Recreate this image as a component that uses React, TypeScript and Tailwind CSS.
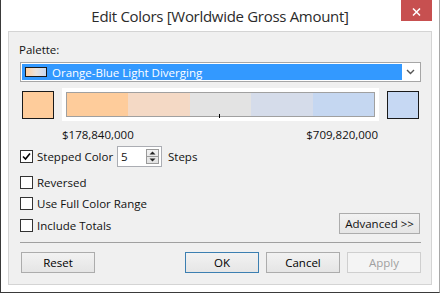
import React from 'react';

const steps = ['#fecc9b', '#f4d9c5', '#e3e3e3', '#d5dcea', '#c5d7f1'];

function CheckBox({ checked = false }: { checked?: boolean }) {
  return (
    <span className="w-[13px] h-[13px] border border-[#333333] bg-white flex items-center justify-center shrink-0">
      {checked && (
        <svg width="9" height="9" viewBox="0 0 9 9">
          <path d="M1 4.5 L3.5 7 L8 1.5" fill="none" stroke="#000" strokeWidth="1.6" />
        </svg>
      )}
    </span>
  );
}

function WinButton({
  children,
  variant = 'normal',
}: {
  children: React.ReactNode;
  variant?: 'normal' | 'default' | 'disabled';
}) {
  const tone =
    variant === 'default'
      ? 'border-[#3c7fb1] bg-gradient-to-b from-[#f2f2f2] to-[#e6e6e6] text-black'
      : variant === 'disabled'
        ? 'border-[#cfcfcf] bg-[#f4f4f4] text-[#a0a0a0]'
        : 'border-[#acacac] bg-gradient-to-b from-[#f2f2f2] to-[#e5e5e5] text-black';
  return (
    <button className={`w-[74px] h-[21px] border text-[11.5px] leading-none flex items-center justify-center ${tone}`}>
      {children}
    </button>
  );
}

export default function App() {
  return (
    <div className="w-[440px] h-[293px] bg-white border-l border-b border-r border-l-[#3a3a3a] border-b-[#3a3a3a] border-r-[#a8a8a8] flex flex-col font-['Open_Sans',sans-serif] text-[#111] overflow-hidden">
      {/* Title bar */}
      <div className="relative h-[31px] shrink-0 flex items-center justify-center">
        <span className="text-[15px] text-[#2b2b2b] tracking-[-0.3px] pt-[1px]">
          Edit Colors [Worldwide Gross Amount]
        </span>
        <div className="absolute top-0 right-[7px] w-[31px] h-[21px] bg-[#c75050] flex items-center justify-center pt-[2px]">
          <svg width="9" height="8" viewBox="0 0 9 8">
            <path d="M1 0.5 L8 7.5 M8 0.5 L1 7.5" stroke="#fff" strokeWidth="1.5" />
          </svg>
        </div>
      </div>

      {/* Panel */}
      <div className="ml-[7px] w-[424px] h-[254px] border border-[#d4d4d4] bg-[#f0f0f0] pl-[11px] pr-[10px] pt-[10px] flex flex-col text-[11.5px] leading-[15px]">
        <div className="ml-[-1px]">Palette:</div>

        {/* Dropdown */}
        <div className="mt-[5px] h-[20px] border border-[#a6a6a6] bg-white p-[1px] flex">
          <div className="w-[380px] h-[16px] bg-[#3399ff] flex items-center pl-[3px] text-white">
            <span className="w-[22px] h-[10px] border border-[#1a1a1a] bg-gradient-to-r from-[#ffcf9f] via-[#ebe4df] to-[#c7d8f0]" />
            <span className="ml-[5px]">Orange-Blue Light Diverging</span>
          </div>
          <div className="flex-1 flex items-center justify-center">
            <svg width="9" height="6" viewBox="0 0 9 6">
              <path d="M1 1 L4.5 4.5 L8 1" fill="none" stroke="#555" strokeWidth="1.4" />
            </svg>
          </div>
        </div>

        {/* Color ramp */}
        <div className="mt-[6px] flex items-center">
          <span className="ml-[2px] w-[32px] h-[28px] border border-[#1a1a1a] bg-[#fecc9b]" />
          <div className="ml-[8px] w-[317px] h-[33px] bg-white p-[4px]">
            <div className="relative h-[25px] border border-[#a0a0a0] flex">
              {steps.map((c, i) => (
                <div key={i} className="flex-1" style={{ backgroundColor: c }} />
              ))}
              <span className="absolute left-[152px] bottom-[-2px] w-[1px] h-[4px] bg-black" />
            </div>
          </div>
          <span className="ml-[8px] w-[32px] h-[28px] border border-[#1a1a1a] bg-[#c6d8f3]" />
        </div>

        <div className="mt-[6px] ml-[42px] w-[316px] flex justify-between">
          <span>$178,840,000</span>
          <span>$709,820,000</span>
        </div>

        {/* Stepped color */}
        <div className="mt-[4px] h-[21px] flex items-center">
          <CheckBox checked />
          <span className="ml-[4px] w-[80px] shrink-0">Stepped Color</span>
          <div className="w-[45px] h-[21px] border border-[#abadb3] bg-white flex items-center">
            <span className="ml-[3px] flex-1">5</span>
            <div className="w-[13px] h-[15px] mr-[2px] border border-[#9a9a9a] bg-gradient-to-b from-[#f2f2f2] to-[#e2e2e2] flex flex-col">
              <div className="flex-1 flex items-center justify-center border-b border-[#9a9a9a]">
                <svg width="7" height="4" viewBox="0 0 7 4"><path d="M0.5 3.5 L3.5 0.5 L6.5 3.5Z" fill="#222" /></svg>
              </div>
              <div className="flex-1 flex items-center justify-center">
                <svg width="7" height="4" viewBox="0 0 7 4"><path d="M0.5 0.5 L3.5 3.5 L6.5 0.5Z" fill="#222" /></svg>
              </div>
            </div>
          </div>
          <span className="ml-[6px]">Steps</span>
        </div>

        <div className="mt-[4px] h-[22px] flex items-center">
          <CheckBox />
          <span className="ml-[4px]">Reversed</span>
        </div>
        <div className="h-[20px] flex items-center">
          <CheckBox />
          <span className="ml-[4px]">Use Full Color Range</span>
        </div>
        <div className="h-[21px] flex items-end justify-between">
          <div className="flex items-center pb-[1px]">
            <CheckBox />
            <span className="ml-[4px]">Include Totals</span>
          </div>
          <button className="mr-[1px] w-[81px] h-[21px] border border-[#acacac] bg-gradient-to-b from-[#f2f2f2] to-[#e5e5e5] text-[11.5px] leading-none">
            Advanced &gt;&gt;
          </button>
        </div>

        <div className="mt-[8px] h-[1px] bg-[#a0a0a0]" />

        {/* Footer buttons */}
        <div className="mt-[9px] flex items-center">
          <div className="ml-[1px]">
            <WinButton>Reset</WinButton>
          </div>
          <div className="ml-auto flex gap-[7px]">
            <WinButton variant="default">OK</WinButton>
            <WinButton>Cancel</WinButton>
            <WinButton variant="disabled">Apply</WinButton>
          </div>
        </div>
      </div>
    </div>
  );
}
